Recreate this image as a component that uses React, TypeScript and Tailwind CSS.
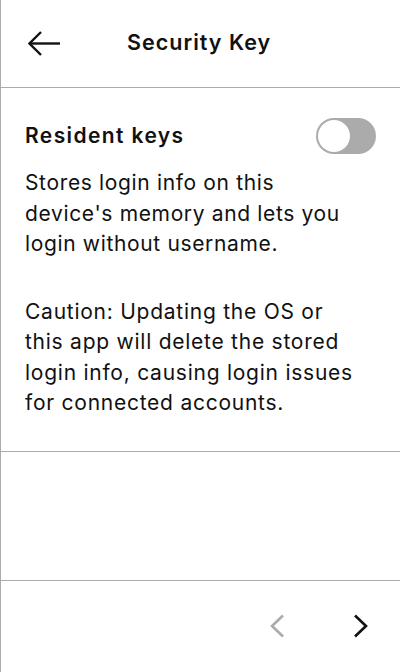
import { useState } from 'react';

// Back arrow drawn to match the thin header glyph
function BackArrow() {
  return (
    <svg width="33" height="25" viewBox="0 0 33 25" fill="none" stroke="#111" strokeWidth="2.4" strokeLinecap="butt">
      <path d="M1.5 12.5H32" />
      <path d="M13 1L1.5 12.5L13 24" />
    </svg>
  );
}

function Chevron({ dir, color }: { dir: 'left' | 'right'; color: string }) {
  const d = dir === 'left' ? 'M13 1.5L2 12L13 22.5' : 'M2 1.5L13 12L2 22.5';
  return (
    <svg width="15" height="24" viewBox="0 0 15 24" fill="none" stroke={color} strokeWidth="2.6">
      <path d={d} />
    </svg>
  );
}

function Toggle({ on, onChange }: { on: boolean; onChange: (v: boolean) => void }) {
  return (
    <button
      type="button"
      onClick={() => onChange(!on)}
      className={`flex w-[60px] h-[36px] rounded-full p-[2px] ${on ? 'justify-end bg-[#1a73e8]' : 'justify-start bg-[#ababab]'}`}
    >
      <span className="block w-[32px] h-[32px] rounded-full bg-white" />
    </button>
  );
}

// Lines broken where the device screen breaks them
const description = ['Stores login info on this', "device's memory and lets you", 'login without username.'];
const caution = [
  'Caution: Updating the OS or',
  'this app will delete the stored',
  'login info, causing login issues',
  'for connected accounts.',
];

export default function App() {
  const [resident, setResident] = useState(false);

  return (
    <div
      className="w-[400px] h-[672px] flex flex-col bg-white border-l border-[#ababab] text-[#111]"
      style={{ fontFamily: 'Inter, "Noto Sans", sans-serif' }}
    >
      {/* Header */}
      <header className="h-[88px] flex items-center border-b border-[#ababab] pl-[27px]">
        <BackArrow />
        <h1 className="ml-[66px] text-[21.5px] font-semibold tracking-[1px] -mt-[2px]">Security Key</h1>
      </header>

      {/* Setting */}
      <section className="h-[364px] border-b border-[#ababab] pl-[24px] pr-[20px] pt-[30px]">
        <div className="flex items-center justify-between pr-[4px]">
          <h2 className="text-[21px] font-semibold tracking-[1.4px]">Resident keys</h2>
          <Toggle on={resident} onChange={setResident} />
        </div>
        <p className="mt-[14px] text-[21px] leading-[30.5px] tracking-[0.65px] whitespace-nowrap">
          {description.map((line) => (
            <span key={line} className="block">{line}</span>
          ))}
        </p>
        <p className="mt-[37px] text-[21px] leading-[30.5px] tracking-[0.75px] whitespace-nowrap">
          {caution.map((line) => (
            <span key={line} className="block">{line}</span>
          ))}
        </p>
      </section>

      <div className="h-[129px] border-b border-[#ababab]" />

      {/* Pager */}
      <footer className="flex-1 flex items-center justify-end pr-[32px] gap-[68px] pb-[2px]">
        <Chevron dir="left" color="#ababab" />
        <Chevron dir="right" color="#111" />
      </footer>
    </div>
  );
}
